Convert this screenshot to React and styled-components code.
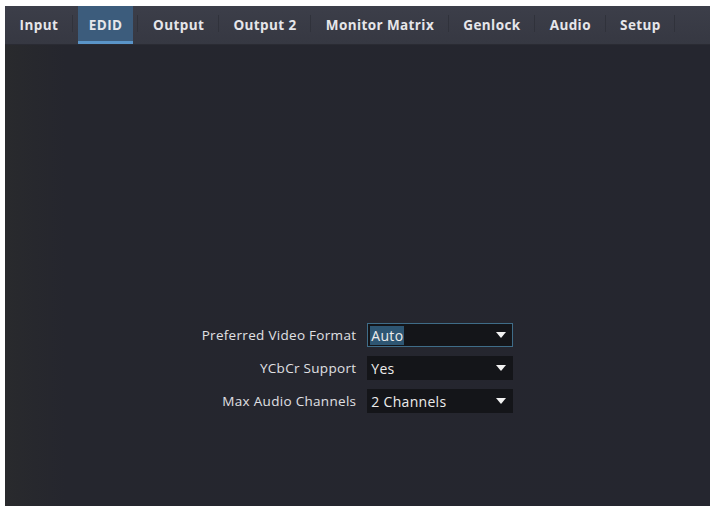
import styled, { createGlobalStyle } from 'styled-components'

const Global = createGlobalStyle`
html, body {
    margin: 0;
    padding: 0;
    background: #ffffff;
}
body {
    font-family: "Open Sans", "Liberation Sans", sans-serif;
}
`

const tabs = ['Input', 'EDID', 'Output', 'Output 2', 'Monitor Matrix', 'Genlock', 'Audio', 'Setup']

const fields = [
    { label: 'Preferred Video Format', value: 'Auto', focused: true },
    { label: 'YCbCr Support', value: 'Yes' },
    { label: 'Max Audio Channels', value: '2 Channels' },
]

const App = () => {
    return (
        <>
            <Global />
            <Frame>
                <TabBar>
                    {tabs.map((t) => (
                        <Tab key={t} $active={t === 'EDID'}>{t}</Tab>
                    ))}
                </TabBar>
                <Body>
                    <Form>
                        {fields.map((f) => (
                            <Row key={f.label}>
                                <Label>{f.label}</Label>
                                <Select $focused={f.focused}>
                                    <Value $selected={f.focused}>{f.value}</Value>
                                    <Arrow viewBox="0 0 10 6">
                                        <path d="M0 0 L10 0 L5 6 Z" fill="#f2f2f2" />
                                    </Arrow>
                                </Select>
                            </Row>
                        ))}
                    </Form>
                </Body>
            </Frame>
        </>
    )
}

const Frame = styled.div`
margin: 6px 4px 0 5px;
height: 500px;
display: flex;
flex-direction: column;
background: #25262e;
`
const TabBar = styled.div`
height: 38px;
display: flex;
align-items: stretch;
background: linear-gradient(#3c3e49, #363842);
border-bottom: 1px solid #2a2b33;
`
const Tab = styled.div`
position: relative;
display: flex;
align-items: center;
padding: 3px ${(p) => (p.$active ? '11px' : '14.6px')} 0;
font-size: 13.5px;
font-weight: 700;
color: #e6e6ea;
letter-spacing: 0.4px;
background: ${(p) => (p.$active ? '#3c5c7c' : 'transparent')};
border-bottom: ${(p) => (p.$active ? '3px solid #5a94c8' : '3px solid transparent')};
margin: 0 ${(p) => (p.$active ? '5px' : '0')};
&::after {
    content: '';
    position: absolute;
    right: ${(p) => (p.$active ? '-5px' : '0')};
    top: 9px;
    bottom: 9px;
    width: 1px;
    background: #30323b;
}
`
const Body = styled.div`
flex: 1;
display: flex;
justify-content: center;
padding-top: 278px;
background: linear-gradient(90deg, #292a2d 0px, #25262e 60px, #25262f 100%);
`
const Form = styled.div`
display: grid;
grid-template-columns: auto 146px;
column-gap: 11px;
row-gap: 9px;
align-content: start;
`
const Row = styled.div`
display: contents;
`
const Label = styled.div`
font-size: 13.5px;
letter-spacing: 0.3px;
color: #e0e0e4;
text-align: right;
align-self: center;
`
const Select = styled.div`
height: 24px;
box-sizing: border-box;
display: flex;
align-items: center;
justify-content: space-between;
padding: 0 6px 0 2px;
background: #141519;
border: 1px solid ${(p) => (p.$focused ? '#3f6c88' : '#141519')};
`
const Value = styled.span`
font-size: 14px;
letter-spacing: 0.3px;
color: #ececec;
padding: 0 1px;
background: ${(p) => (p.$selected ? '#2e5673' : 'transparent')};
`
const Arrow = styled.svg`
width: 10px;
height: 6px;
`

export default App
